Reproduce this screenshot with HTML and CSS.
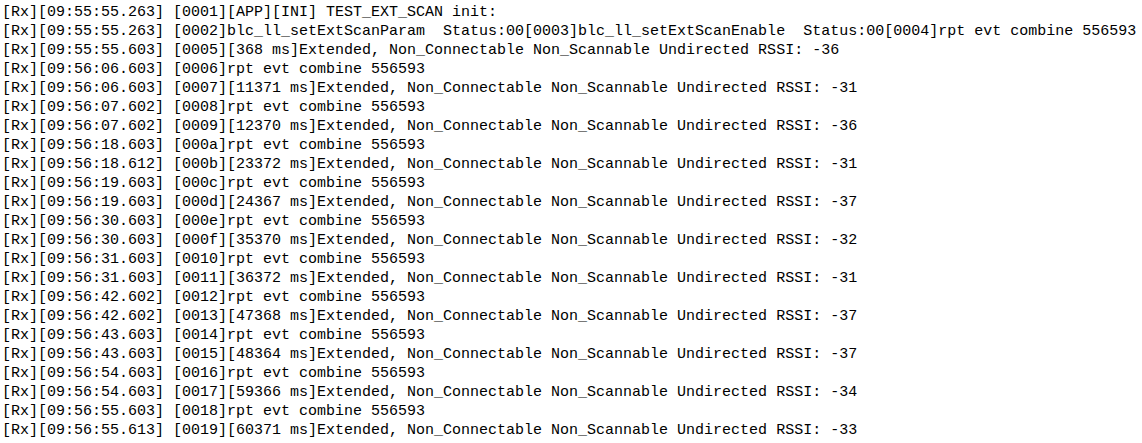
FILE: index.html
```html
<!DOCTYPE html>
<html>
<head>
<meta charset="utf-8">
<link rel="stylesheet" href="styles.css">
</head>
<body>
<pre class="log">[Rx][09:55:55.263] [0001][APP][INI] TEST_EXT_SCAN init:
[Rx][09:55:55.263] [0002]blc_ll_setExtScanParam  Status:00[0003]blc_ll_setExtScanEnable  Status:00[0004]rpt evt combine 556593
[Rx][09:55:55.603] [0005][368 ms]Extended, Non_Connectable Non_Scannable Undirected RSSI: -36
[Rx][09:56:06.603] [0006]rpt evt combine 556593
[Rx][09:56:06.603] [0007][11371 ms]Extended, Non_Connectable Non_Scannable Undirected RSSI: -31
[Rx][09:56:07.602] [0008]rpt evt combine 556593
[Rx][09:56:07.602] [0009][12370 ms]Extended, Non_Connectable Non_Scannable Undirected RSSI: -36
[Rx][09:56:18.603] [000a]rpt evt combine 556593
[Rx][09:56:18.612] [000b][23372 ms]Extended, Non_Connectable Non_Scannable Undirected RSSI: -31
[Rx][09:56:19.603] [000c]rpt evt combine 556593
[Rx][09:56:19.603] [000d][24367 ms]Extended, Non_Connectable Non_Scannable Undirected RSSI: -37
[Rx][09:56:30.603] [000e]rpt evt combine 556593
[Rx][09:56:30.603] [000f][35370 ms]Extended, Non_Connectable Non_Scannable Undirected RSSI: -32
[Rx][09:56:31.603] [0010]rpt evt combine 556593
[Rx][09:56:31.603] [0011][36372 ms]Extended, Non_Connectable Non_Scannable Undirected RSSI: -31
[Rx][09:56:42.602] [0012]rpt evt combine 556593
[Rx][09:56:42.602] [0013][47368 ms]Extended, Non_Connectable Non_Scannable Undirected RSSI: -37
[Rx][09:56:43.603] [0014]rpt evt combine 556593
[Rx][09:56:43.603] [0015][48364 ms]Extended, Non_Connectable Non_Scannable Undirected RSSI: -37
[Rx][09:56:54.603] [0016]rpt evt combine 556593
[Rx][09:56:54.603] [0017][59366 ms]Extended, Non_Connectable Non_Scannable Undirected RSSI: -34
[Rx][09:56:55.603] [0018]rpt evt combine 556593
[Rx][09:56:55.613] [0019][60371 ms]Extended, Non_Connectable Non_Scannable Undirected RSSI: -33</pre>
</body>
</html>
```
FILE: styles.css
```css
html, body {
  margin: 0;
  padding: 0;
  background: #fff;
}
.log {
  margin: 0;
  padding: 3px 0 0 2px;
  font-family: "Liberation Mono", "DejaVu Sans Mono", monospace;
  font-size: 15px;
  line-height: 19px;
  color: #000;
  white-space: pre;
}
```
